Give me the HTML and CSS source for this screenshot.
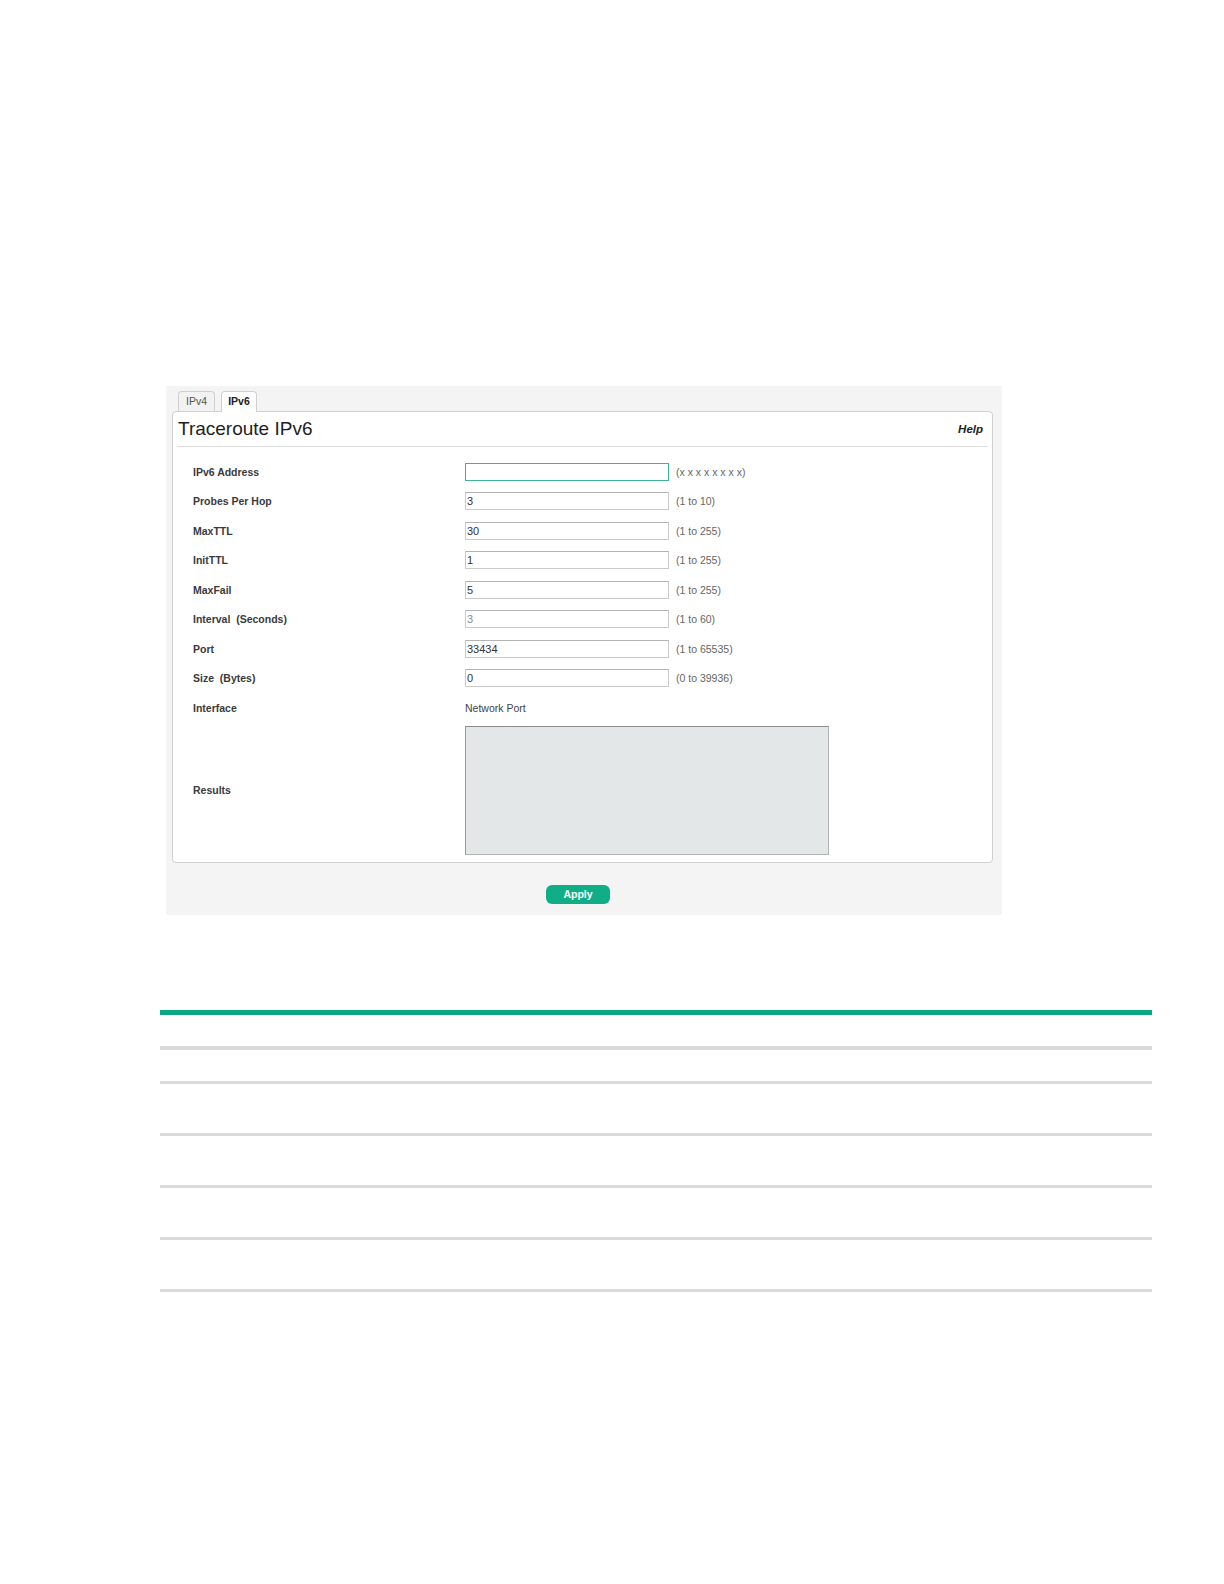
FILE: index.html
```html
<!DOCTYPE html>
<html lang="en">
<head>
<meta charset="utf-8">
<title>Traceroute IPv6</title>
<link rel="stylesheet" href="styles.css">
</head>
<body>
<div class="page">
  <div class="app">
    <div class="tabs">
      <div class="tab">IPv4</div>
      <div class="tab active">IPv6</div>
    </div>
    <div class="panel">
      <div class="panel-head">
        <h1 class="title">Traceroute IPv6</h1>
        <span class="help">Help</span>
      </div>
      <div class="form">
        <div class="row"><span class="label">IPv6 Address</span><input class="field focus" type="text" value=""><span class="hint">(x x x x x x x x)</span></div>
        <div class="row"><span class="label">Probes Per Hop</span><input class="field" type="text" value="3"><span class="hint">(1 to 10)</span></div>
        <div class="row"><span class="label">MaxTTL</span><input class="field" type="text" value="30"><span class="hint">(1 to 255)</span></div>
        <div class="row"><span class="label">InitTTL</span><input class="field" type="text" value="1"><span class="hint">(1 to 255)</span></div>
        <div class="row"><span class="label">MaxFail</span><input class="field" type="text" value="5"><span class="hint">(1 to 255)</span></div>
        <div class="row"><span class="label">Interval&nbsp; (Seconds)</span><input class="field dim" type="text" value="3"><span class="hint">(1 to 60)</span></div>
        <div class="row"><span class="label">Port</span><input class="field" type="text" value="33434"><span class="hint">(1 to 65535)</span></div>
        <div class="row"><span class="label">Size&nbsp; (Bytes)</span><input class="field" type="text" value="0"><span class="hint">(0 to 39936)</span></div>
        <div class="row"><span class="label">Interface</span><span class="static">Network Port</span></div>
        <div class="row results"><span class="label">Results</span><textarea class="output" readonly></textarea></div>
      </div>
    </div>
    <div class="actions">
      <button class="apply" type="button">Apply</button>
    </div>
  </div>

  <div class="doc-table">
    <div class="doc-head"></div>
    <div class="doc-row short"></div>
    <div class="doc-row"></div>
    <div class="doc-row"></div>
    <div class="doc-row"></div>
    <div class="doc-row"></div>
  </div>
</div>
</body>
</html>
```

FILE: styles.css
```css
html, body {
  margin: 0;
  padding: 0;
  background: #ffffff;
}

body {
  font-family: "Liberation Sans", Arial, sans-serif;
  color: #333333;
}

.page {
  padding-top: 386px;
  padding-bottom: 60px;
}

/* ---------- application frame ---------- */
.app {
  margin-left: 166px;
  width: 836px;
  box-sizing: border-box;
  background: #f4f4f4;
  padding: 5px 9px 11px 6px;
}

.tabs {
  display: flex;
  align-items: flex-end;
  gap: 6px;
  padding-left: 6px;
  height: 20px;
}

.tab {
  box-sizing: border-box;
  width: 37px;
  height: 20px;
  border: 1px solid #d0d0d0;
  border-bottom: none;
  border-radius: 4px 4px 0 0;
  background: #f2f2f2;
  font-size: 10.5px;
  line-height: 19px;
  text-align: center;
  color: #555555;
}

.tab.active {
  width: 36px;
  background: #ffffff;
  color: #222222;
  font-weight: bold;
  position: relative;
  z-index: 1;
  margin-bottom: -1px;
  height: 21px;
}

.panel {
  background: #ffffff;
  border: 1px solid #cfcfcf;
  border-radius: 4px;
  padding-bottom: 7px;
}

.panel-head {
  display: flex;
  align-items: center;
  justify-content: space-between;
  height: 34px;
  margin: 0 4px;
  padding: 0 5px 0 1px;
  border-bottom: 1px solid #dddddd;
}

.title {
  margin: 0;
  font-size: 19px;
  font-weight: normal;
  color: #1e1e1e;
}

.help {
  font-size: 11.5px;
  font-weight: bold;
  font-style: italic;
  color: #222222;
}

/* ---------- form rows ---------- */
.form {
  padding-top: 10px;
}

.row {
  display: grid;
  grid-template-columns: 265px 204px auto;
  column-gap: 7px;
  align-items: center;
  height: 29.5px;
  padding-left: 20px;
}

.label {
  font-size: 10.5px;
  font-weight: bold;
  color: #3a3a3a;
}

.field {
  box-sizing: border-box;
  width: 204px;
  height: 18px;
  margin: 0;
  padding: 0 1px;
  border: 1px solid #cacaca;
  border-top-color: #b4b4b4;
  border-radius: 0;
  background: #ffffff;
  font-family: "Liberation Sans", Arial, sans-serif;
  font-size: 11px;
  color: #333333;
  outline: none;
}

.field.focus {
  border-color: #3db39b;
}

.field.dim {
  color: #8a8a8a;
}

.hint {
  font-size: 10.5px;
  color: #666666;
}

.static {
  font-size: 10.5px;
  color: #444444;
}

.row.results {
  height: auto;
  margin-top: 3px;
}

.output {
  box-sizing: border-box;
  display: block;
  width: 364px;
  height: 129px;
  margin: 0;
  padding: 0;
  border: 1px solid #b2b2b2;
  border-top-color: #8c8c8c;
  border-left-color: #9a9a9a;
  background: #e3e7e7;
  resize: none;
  outline: none;
}

/* ---------- actions ---------- */
.actions {
  display: flex;
  justify-content: center;
  padding-top: 22px;
  padding-right: 9px;
}

.apply {
  width: 64px;
  height: 19px;
  padding: 0;
  border: none;
  border-radius: 6px;
  background: #0fae86;
  color: #ffffff;
  font-family: "Liberation Sans", Arial, sans-serif;
  font-size: 10.5px;
  font-weight: bold;
}

/* ---------- empty document table ---------- */
.doc-table {
  margin-top: 95px;
  margin-left: 160px;
  width: 992px;
}

.doc-head {
  height: 31px;
  border-top: 5px solid #0aa983;
  border-bottom: 4px solid #dadada;
}

.doc-row {
  height: 49px;
  border-bottom: 3px solid #dadada;
}

.doc-row.short {
  height: 31px;
}
```
